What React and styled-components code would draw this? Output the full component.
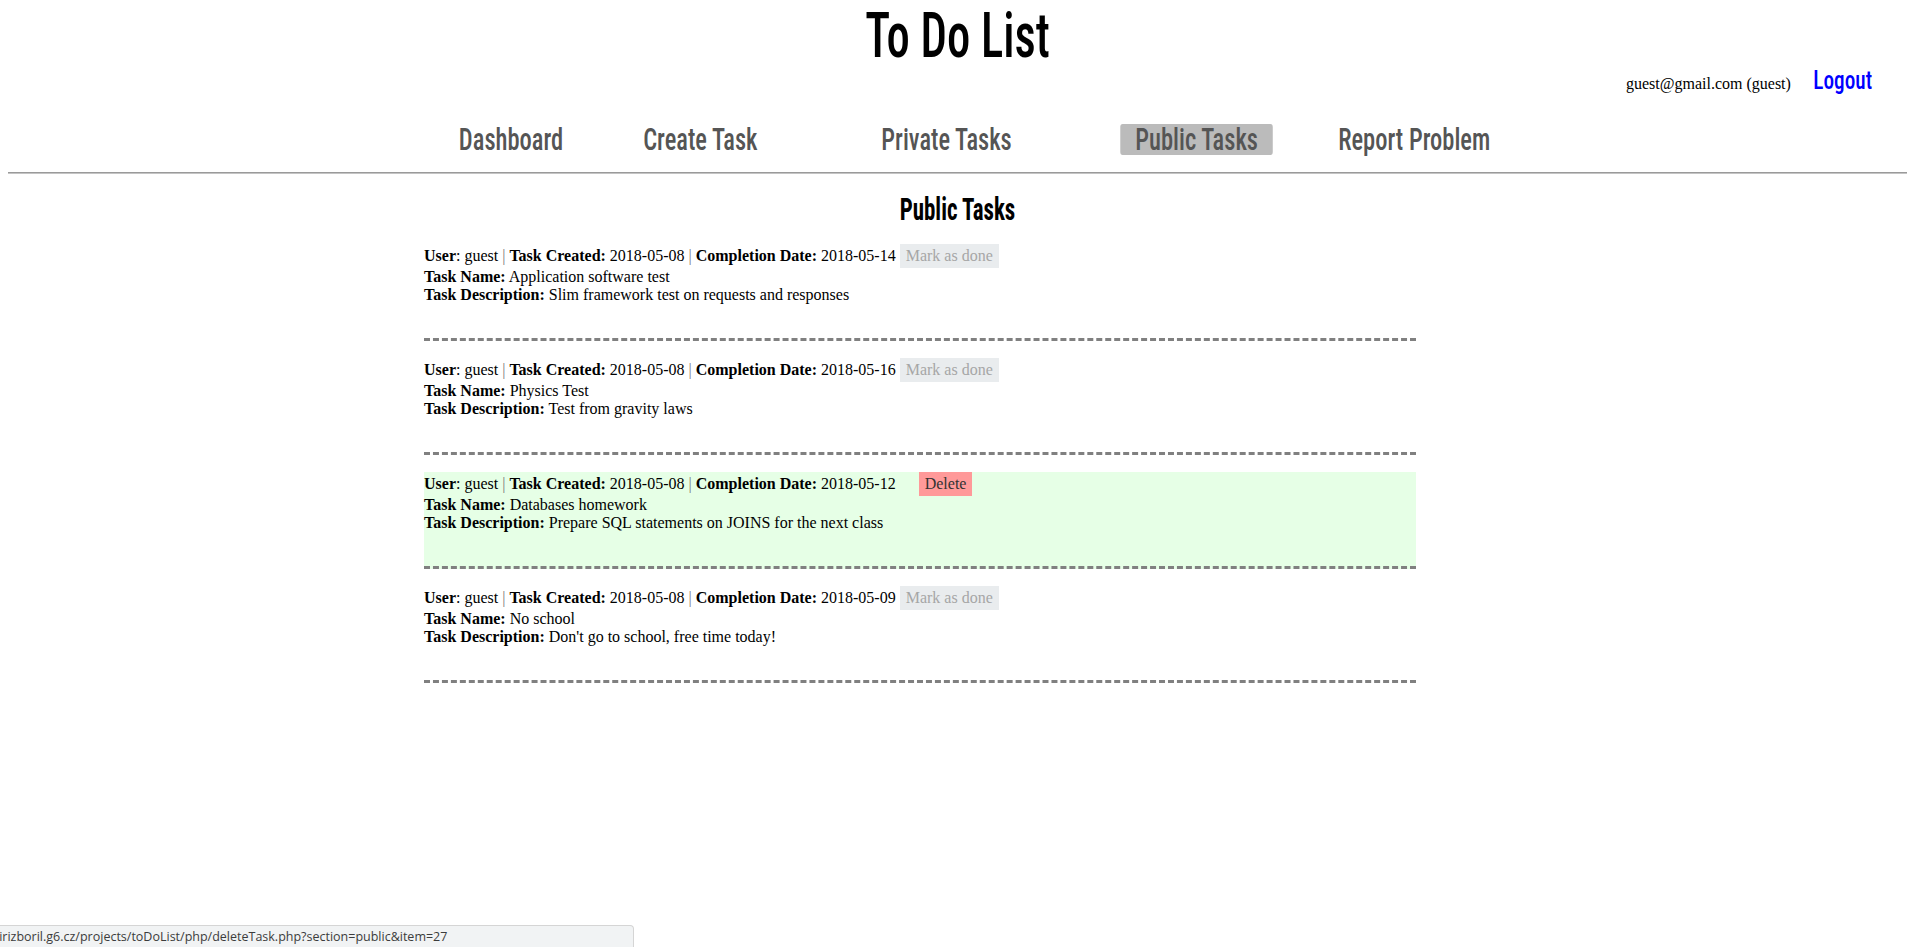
import React from "react";
import styled, { createGlobalStyle } from "styled-components";

const GlobalStyle = createGlobalStyle`
  body {
    margin: 8px;
    background: #fff;
    font-family: "Liberation Serif", "Times New Roman", serif;
    font-size: 16px;
    color: #000;
  }
`;

const tasks = [
  {
    id: 24,
    created: "2018-05-08",
    due: "2018-05-14",
    name: "Application software test",
    description: "Slim framework test on requests and responses",
    own: false,
  },
  {
    id: 25,
    created: "2018-05-08",
    due: "2018-05-16",
    name: "Physics Test",
    description: "Test from gravity laws",
    own: false,
  },
  {
    id: 27,
    created: "2018-05-08",
    due: "2018-05-12",
    name: "Databases homework",
    description: "Prepare SQL statements on JOINS for the next class",
    own: true,
  },
  {
    id: 28,
    created: "2018-05-08",
    due: "2018-05-09",
    name: "No school",
    description: "Don't go to school, free time today!",
    own: false,
  },
];

const navItems = [
  { label: "Dashboard", width: 190 },
  { label: "Create Task", width: 188 },
  { label: "Private Tasks", width: 306 },
  { label: "Public Tasks", width: 194, active: true },
  { label: "Report Problem", width: 240 },
];

const App = () => {
  return (
    <>
      <GlobalStyle />
      <Header>
        <Title>To Do List</Title>
        <UserBar>
          <UserName>guest@gmail.com (guest)</UserName>
          <Logout href="#">Logout</Logout>
        </UserBar>
        <Nav>
          {navItems.map((item) => (
            <NavCell key={item.label} w={item.width}>
              <NavLink href="#" $active={item.active}>
                {item.label}
              </NavLink>
            </NavCell>
          ))}
        </Nav>
        <Divider />
      </Header>

      <Main>
        <Heading>Public Tasks</Heading>
        <TaskList>
          {tasks.map((task) => (
            <Task key={task.id} $own={task.own}>
              <Line>
                <b>User</b>: guest <Sep>|</Sep> <b>Task Created:</b>{" "}
                {task.created} <Sep>|</Sep> <b>Completion Date:</b> {task.due}{" "}
                {task.own ? (
                  <DeleteButton>Delete</DeleteButton>
                ) : (
                  <DoneButton>Mark as done</DoneButton>
                )}
              </Line>
              <Line>
                <b>Task Name:</b> {task.name}
              </Line>
              <Line>
                <b>Task Description:</b> {task.description}
              </Line>
            </Task>
          ))}
        </TaskList>
      </Main>

      <StatusBubble>
        jirizboril.g6.cz/projects/toDoList/php/deleteTask.php?section=public&amp;item=27
      </StatusBubble>
    </>
  );
};

const Header = styled.header`
  display: block;
`;

const Title = styled.h1`
  margin: 0;
  text-align: center;
  font-family: Roboto, "Open Sans", sans-serif;
  font-stretch: 75%;
  font-weight: 500;
  font-size: 63px;
  line-height: 55px;
  transform: scaleX(0.74);
`;

const UserBar = styled.div`
  display: flex;
  justify-content: flex-end;
  align-items: baseline;
  gap: 12px;
  margin-top: 5px;
  padding-right: 35px;
  height: 25px;
`;

const UserName = styled.span`
  font-size: 16px;
`;

const Logout = styled.a`
  display: inline-block;
  white-space: nowrap;
  font-family: Roboto, "Open Sans", sans-serif;
  font-stretch: 75%;
  font-weight: 500;
  font-size: 25px;
  line-height: 25px;
  color: #0000ff;
  text-decoration: none;
  transform: scaleX(0.85);
  transform-origin: right center;
`;

const Nav = styled.nav`
  display: flex;
  margin-top: 31px;
  padding-left: 408px;
`;

const NavCell = styled.div`
  width: ${(p) => p.w}px;
  display: flex;
  justify-content: center;
`;

const NavLink = styled.a`
  display: inline-block;
  padding: 0 19px;
  border-radius: 3px;
  font-family: Roboto, "Open Sans", sans-serif;
  font-stretch: 75%;
  font-weight: 500;
  font-size: 31px;
  line-height: 31px;
  color: #555;
  text-decoration: none;
  white-space: nowrap;
  background: ${(p) => (p.$active ? "#bbbbbb" : "transparent")};
  transform: scaleX(0.79);
`;

const Divider = styled.div`
  height: 0;
  margin: 17px -5px 0 -5px;
  border-top: 1px solid #9a9a9a;
  border-bottom: 1px solid #c4c4c4;
`;

const Main = styled.main`
  display: block;
`;

const Heading = styled.h2`
  margin: 20px 0 19px;
  text-align: center;
  font-family: Roboto, "Open Sans", sans-serif;
  font-stretch: 75%;
  font-weight: 700;
  font-size: 31px;
  line-height: 31px;
  transform: scaleX(0.74);
`;

const TaskList = styled.div`
  width: 992px;
  margin-left: 416px;
  display: flex;
  flex-direction: column;
  gap: 17px;
`;

const Task = styled.div`
  padding-bottom: 34px;
  border-bottom: 3px dashed #808080;
  background: ${(p) => (p.$own ? "#e6ffe6" : "transparent")};
`;

const Line = styled.div`
  line-height: normal;
`;

const Sep = styled.span`
  color: #777;
`;

const TaskButton = styled.button`
  display: inline-block;
  border: 0;
  margin: 0;
  padding: 3px 6px;
  font-family: "Liberation Serif", "Times New Roman", serif;
  font-size: 16px;
  line-height: normal;
  cursor: pointer;
`;

const DoneButton = styled(TaskButton)`
  background: #e9ecee;
  color: #a6a6a6;
`;

const DeleteButton = styled(TaskButton)`
  margin-left: 19px;
  background: #ff9999;
  color: #333;
`;

const StatusBubble = styled.div`
  position: fixed;
  left: 0;
  bottom: 0;
  width: 634px;
  height: 22px;
  box-sizing: border-box;
  background: #f1f3f4;
  border: 1px solid #d5d5d5;
  border-left: 0;
  border-bottom: 0;
  border-top-right-radius: 4px;
  font-family: "Open Sans", "Noto Sans", sans-serif;
  font-size: 12.5px;
  line-height: 21px;
  color: #3c3c3c;
  white-space: nowrap;
  overflow: hidden;
  text-indent: -4px;
`;

export default App;
